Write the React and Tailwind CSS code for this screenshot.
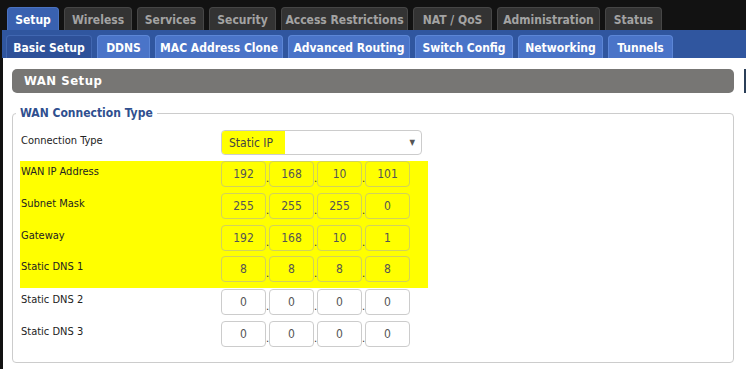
import React from "react";

const mainTabs = [
  { label: "Setup", w: "w-[52px]", active: true },
  { label: "Wireless", w: "w-[68px]" },
  { label: "Services", w: "w-[67px]" },
  { label: "Security", w: "w-[67px]" },
  { label: "Access Restrictions", w: "w-[127px]" },
  { label: "NAT / QoS", w: "w-[79px]" },
  { label: "Administration", w: "w-[103px]" },
  { label: "Status", w: "w-[57px]" },
];

const subTabs = [
  { label: "Basic Setup", w: "w-[86px]", active: true },
  { label: "DDNS", w: "w-[53px]" },
  { label: "MAC Address Clone", w: "w-[128px]" },
  { label: "Advanced Routing", w: "w-[122px]" },
  { label: "Switch Config", w: "w-[98px]" },
  { label: "Networking", w: "w-[85px]" },
  { label: "Tunnels", w: "w-[65px]" },
];

const rows = [
  { label: "WAN IP Address", v: ["192", "168", "10", "101"], hi: true },
  { label: "Subnet Mask", v: ["255", "255", "255", "0"], hi: true },
  { label: "Gateway", v: ["192", "168", "10", "1"], hi: true },
  { label: "Static DNS 1", v: ["8", "8", "8", "8"], hi: true },
  { label: "Static DNS 2", v: ["0", "0", "0", "0"], hi: false },
  { label: "Static DNS 3", v: ["0", "0", "0", "0"], hi: false },
];

function IpRow({ label, v, hi }) {
  return (
    <div className="flex h-[32px] w-[408px]">
      <div className="w-[201px] pl-[1px] pt-[2px] leading-[18px] text-[11px] text-[#222]">{label}</div>
      <div className="flex h-[26px]">
        {v.map((n, i) => (
          <React.Fragment key={i}>
            {i > 0 && (
              <span className="w-[3px] self-end pb-[2px] text-[11px] leading-[12px] text-[#333]">.</span>
            )}
            <input
              readOnly
              value={n}
              className={
                "w-[45px] h-[26px] rounded-[4px] border text-center text-[12px] text-[#555] outline-none " +
                (hi ? "bg-[#ffff00] border-[#d2d25a]" : "bg-white border-[#cccccc]")
              }
            />
          </React.Fragment>
        ))}
      </div>
    </div>
  );
}

export default function App() {
  return (
    <div className="w-[746px] h-[369px] overflow-hidden bg-[#121212] flex flex-col font-['DejaVu_Sans_Condensed','DejaVu_Sans',sans-serif]">
      {/* main tabs */}
      <div className="flex gap-[5px] pl-[7px] pt-[7px] h-[30px]">
        {mainTabs.map((t) => (
          <div
            key={t.label}
            className={
              t.w +
              " h-[23px] rounded-t-[4px] flex items-center justify-center text-[12px] font-bold pt-[1px] " +
              (t.active
                ? "bg-[#3961b0] border-t border-x border-[#4a72c0] text-white"
                : "bg-[#333333] border-t border-x border-[#464646] text-[#a3a3a3]")
            }
          >
            {t.label}
          </div>
        ))}
      </div>
      {/* sub tabs */}
      <div className="ml-[2px] h-[28px] bg-[#30569f] flex gap-[5px] pl-[4px] pt-[5px]">
        {subTabs.map((t) => (
          <div
            key={t.label}
            className={
              t.w +
              " h-[23px] rounded-t-[4px] flex items-center justify-center text-[12px] font-bold text-white pt-[1px] " +
              (t.active
                ? "bg-[#2e5199] border-t border-x border-[#4167b1]"
                : "bg-[#4a74c8] border-t border-x border-[#5c86d6]")
            }
          >
            {t.label}
          </div>
        ))}
      </div>
      {/* content */}
      <div className="ml-[3px] flex-1 bg-white flex pl-[9px] pt-[11px]">
        <div className="w-[722px] flex flex-col">
          <div className="h-[24px] rounded-[5px] bg-[#777674] flex items-center pl-[12px] text-[13px] font-bold text-white tracking-[0.5px]">
            WAN Setup
          </div>
          <fieldset className="mt-[12px] border border-[#cccccc] rounded-[4px] pb-[9px]">
            <legend className="ml-[3px] px-[4px] text-[12px] leading-[16px] font-bold text-[#2f4f8f]">
              WAN Connection Type
            </legend>
            <div className="ml-[7px] pt-[9px] flex flex-col">
              <div className="flex h-[31px] w-[408px]">
                <div className="w-[201px] pl-[1px] pt-[2px] leading-[18px] text-[11px] text-[#222]">
                  Connection Type
                </div>
                <div className="w-[201px] h-[25px] rounded-[4px] border border-[#cccccc] flex items-stretch justify-between overflow-hidden">
                  <span className="bg-[#ffff00] flex items-center pl-[7px] pr-[12px] text-[12px] text-[#444]">
                    Static IP
                  </span>
                  <span className="flex items-center pr-[6px] text-[8px] text-[#555]">▼</span>
                </div>
              </div>
              <div className="bg-[#ffff00] w-[408px] h-[127px] flex flex-col">
                {rows.slice(0, 4).map((r) => (
                  <IpRow key={r.label} {...r} />
                ))}
              </div>
              <div className="pt-[1px] flex flex-col">
                {rows.slice(4).map((r) => (
                  <IpRow key={r.label} {...r} />
                ))}
              </div>
            </div>
          </fieldset>
        </div>
        <div className="ml-[10px] w-[2px] pt-0">
          <div className="h-[24px] bg-[#2b3f58]" />
        </div>
      </div>
    </div>
  );
}
